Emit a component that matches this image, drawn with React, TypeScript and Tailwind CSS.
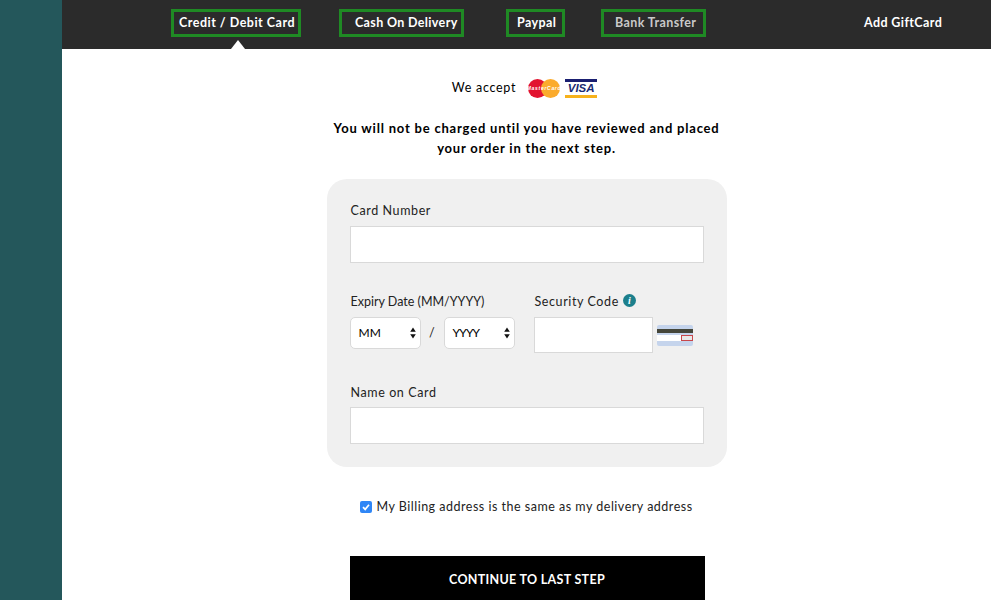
import React from "react";

const tabClass = "h-[28px] border-[3px] border-[#1f8a24] flex items-center pt-[1px] text-[12.5px] font-bold leading-none whitespace-nowrap";

function Arrows() {
  return (
    <svg width="6" height="12" viewBox="0 0 6 12" className="shrink-0">
      <path d="M3 0.5L5.8 4.8H0.2Z M3 11.5L5.8 7.2H0.2Z" fill="#111" />
    </svg>
  );
}

function MasterCard() {
  return (
    <svg width="32" height="19" viewBox="0 0 32 19" className="shrink-0">
      <circle cx="9.5" cy="9.5" r="9.5" fill="#e2132f" />
      <circle cx="22.5" cy="9.5" r="9.5" fill="#fbab2c" />
      <text x="16" y="11.2" textAnchor="middle" fontSize="5" fontWeight="700" fontStyle="italic" fill="#fff" fontFamily="'Liberation Sans', sans-serif">MasterCard</text>
    </svg>
  );
}

function Visa() {
  return (
    <div className="w-[32px] h-[19px] flex flex-col justify-between bg-white shrink-0">
      <div className="h-[3px] bg-[#1a1f71]" />
      <div className="text-[11.5px] leading-[11px] font-bold italic text-[#1a2a72] text-center tracking-normal font-['Liberation_Sans',sans-serif]">VISA</div>
      <div className="h-[3px] bg-[#f7b21c]" />
    </div>
  );
}

function CvvCard() {
  return (
    <div className="w-[36px] h-[21px] rounded-[2px] bg-[#c5d4ec] flex flex-col pt-[4px] shrink-0 overflow-hidden">
      <div className="h-[4px] bg-[#45463a]" />
      <div className="h-[6px] mt-[2px] bg-white flex justify-end">
        <div className="w-[12px] h-[6px] border border-[#c8474b] bg-[#e9e9e9]" />
      </div>
    </div>
  );
}

function Select({ label, track }: { label: string; track: string }) {
  return (
    <div className="w-[71px] h-[32px] bg-white border border-[#d9d9d9] rounded-[5px] flex items-center justify-between pl-[8px] pr-[4px] text-[12px] text-black">
      <span className={track}>{label}</span>
      <Arrows />
    </div>
  );
}

export default function App() {
  return (
    <div className="w-[991px] h-[600px] overflow-hidden flex bg-white text-black font-['Lato',sans-serif]">
      <div className="w-[62px] shrink-0 bg-[#24575b]" />
      <div className="flex-1 flex flex-col min-w-0">
        <div className="h-[49px] shrink-0 bg-[#2b2b2b] flex items-start pt-[9px] pl-[109px] text-white">
          <div className="relative">
            <div className={`${tabClass} w-[130px] pl-[5px] tracking-[0.5px]`}>Credit / Debit Card</div>
            <div className="absolute left-[60px] top-[31px] w-0 h-0 border-l-[7px] border-r-[7px] border-b-[9px] border-l-transparent border-r-transparent border-b-white" />
          </div>
          <div className={`${tabClass} w-[125px] ml-[38px] pl-[13px] tracking-[0.35px]`}>Cash On Delivery</div>
          <div className={`${tabClass} w-[59px] ml-[42px] pl-[8px] tracking-[0.4px]`}>Paypal</div>
          <div className={`${tabClass} w-[105px] ml-[36px] pl-[11px] tracking-[0.4px] text-[#c9c9c9]`}>Bank Transfer</div>
          <div className="ml-[158px] h-[28px] flex items-center pt-[1px] text-[12.5px] font-bold tracking-[0.4px] leading-none whitespace-nowrap">Add GiftCard</div>
        </div>

        <div className="flex flex-col items-center">
          <div className="mt-[28px] mr-[4px] h-[22px] flex items-center text-[12.5px] tracking-[0.7px]">
            <span>We accept</span>
            <span className="ml-[12px] flex items-center gap-[5px]">
              <MasterCard />
              <Visa />
            </span>
          </div>
          <p className="mt-[19px] text-center text-[13px] leading-[20px] font-bold tracking-[0.8px]">
            You will not be charged until you have reviewed and placed
            <br />
            your order in the next step.
          </p>

          <div className="mt-[21px] w-[400px] h-[288px] rounded-[20px] bg-[#f0f0f0] px-[23px] pt-[24px] text-[12.5px] tracking-[0.6px] text-[#222]">
            <div className="leading-[16px] pl-[1px]">Card Number</div>
            <div className="mt-[7px] h-[37px] w-[354px] bg-white border border-[#d9d9d9]" />

            <div className="mt-[31px] flex">
              <div className="w-[184px]">
                <div className="h-[16px] leading-[16px] pl-[1px] whitespace-nowrap tracking-normal">Expiry Date (MM/YYYY)</div>
                <div className="mt-[7px] flex items-center">
                  <Select label="MM" track="tracking-normal" />
                  <span className="w-[23px] text-center">/</span>
                  <Select label="YYYY" track="tracking-[-0.8px]" />
                </div>
              </div>
              <div>
                <div className="h-[16px] flex items-center whitespace-nowrap">
                  <span className="pl-[1px]">Security Code</span>
                  <span className="ml-[4px] -mt-[3px] w-[13px] h-[13px] rounded-full bg-[#1c7f8c] text-white text-[10px] leading-[13px] font-bold italic text-center font-['Liberation_Serif',serif] tracking-normal">i</span>
                </div>
                <div className="mt-[7px] flex items-center">
                  <div className="w-[119px] h-[36px] bg-white border border-[#d9d9d9]" />
                  <div className="ml-[4px]"><CvvCard /></div>
                </div>
              </div>
            </div>

            <div className="mt-[32px] leading-[16px] pl-[1px]">Name on Card</div>
            <div className="mt-[6px] h-[37px] w-[354px] bg-white border border-[#d9d9d9]" />
          </div>

          <div className="mt-[31px] ml-[1px] w-[355px] h-[18px] pl-[10px] flex items-center text-[12.5px] tracking-[0.5px] text-[#222] whitespace-nowrap">
            <span className="w-[12px] h-[12px] rounded-[2px] bg-[#2f86f6] flex items-center justify-center shrink-0">
              <svg width="10" height="10" viewBox="0 0 10 10"><path d="M2 5.2L4.2 7.4L8 2.8" fill="none" stroke="#fff" strokeWidth="1.7" /></svg>
            </span>
            <span className="ml-[5px]">My Billing address is the same as my delivery address</span>
          </div>

          <div className="mt-[40px] ml-[1px] w-[355px] h-[48px] shrink-0 bg-black text-white flex items-center justify-center text-[12.5px] font-bold tracking-[0.3px]">
            CONTINUE TO LAST STEP
          </div>
        </div>
      </div>
    </div>
  );
}
